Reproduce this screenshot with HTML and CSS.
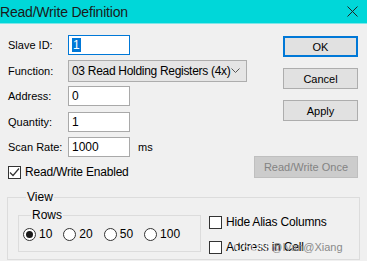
FILE: index.html
```html
<!DOCTYPE html>
<html>
<head>
<meta charset="utf-8">
<link rel="stylesheet" href="styles.css">
</head>
<body>
<div class="window">
  <div class="titlebar">
    <span class="title">Read/Write Definition</span>
    <svg class="close" width="11" height="11" viewBox="0 0 11 11"><path d="M0.5 0.5 L10.5 10.5 M10.5 0.5 L0.5 10.5" stroke="#222" stroke-width="1" fill="none"/></svg>
  </div>
  <div class="content">
    <div class="form">
      <div class="row r1"><span class="label">Slave ID:</span><span class="input focus"><span class="sel">1</span></span></div>
      <div class="row r2"><span class="label">Function:</span><span class="combo"><span>03 Read Holding Registers (4x)</span><svg width="9" height="6" viewBox="0 0 9 6"><path d="M0.5 0.5 L4.5 4.5 L8.5 0.5" stroke="#555" fill="none"/></svg></span></div>
      <div class="row r3"><span class="label">Address:</span><span class="input">0</span></div>
      <div class="row r4"><span class="label">Quantity:</span><span class="input">1</span></div>
      <div class="row r5"><span class="label">Scan Rate:</span><span class="input">1000</span><span class="unit">ms</span></div>
      <div class="row r6"><span class="check"><svg width="11" height="11" viewBox="0 0 11 11"><path d="M1 5.5 L4 8.5 L10 1.5" stroke="#333" stroke-width="1.2" fill="none"/></svg></span><span class="cklabel">Read/Write Enabled</span></div>
    </div>
    <div class="buttons">
      <span class="btn ok">OK</span>
      <span class="btn">Cancel</span>
      <span class="btn">Apply</span>
      <span class="btn wide disabled">Read/Write Once</span>
    </div>
  </div>
  <fieldset class="view">
    <legend>View</legend>
    <div class="viewgrid">
      <div class="leftcol">
        <fieldset class="rows">
          <legend>Rows</legend>
          <div class="radios">
            <span class="radio on"></span><span class="rlabel">10</span>
            <span class="radio"></span><span class="rlabel">20</span>
            <span class="radio"></span><span class="rlabel">50</span>
            <span class="radio"></span><span class="rlabel">100</span>
          </div>
        </fieldset>
        <div class="cutbtn"></div>
      </div>
      <div class="rightcol">
        <div class="ckrow"><span class="check"></span><span class="cklabel">Hide Alias Columns</span></div>
        <div class="ckrow"><span class="check"></span><span class="cklabel">Address in Cell</span></div>
      </div>
    </div>
  </fieldset>
  <span class="watermark">CSDN <span class="wm2">@Ivan@Xiang</span></span>
</div>
</body>
</html>
```
FILE: styles.css
```css
* { box-sizing: border-box; }
html, body { margin: 0; padding: 0; }
body {
  width: 367px; height: 261px; overflow: hidden;
  background: #f0f0f0;
  font-family: "Liberation Sans", Arial, sans-serif;
  font-size: 11px;
  color: #000;
}
.window { position: relative; width: 367px; height: 261px; overflow: hidden; }
.titlebar {
  height: 24px;
  background: #00d7d9;
  border-bottom: 1px solid #7fe6e8;
  display: flex; align-items: center; justify-content: space-between;
  padding: 0 9px 0 0;
}
.title { font-size: 14px; color: #1a1a1a; letter-spacing: -0.2px; }
.content {
  display: flex; justify-content: space-between;
  padding: 0 9px 0 8px;
}
.form { display: flex; flex-direction: column; padding-top: 11px; }
.row { display: flex; align-items: center; }
.label { width: 60px; }
.r2 { margin-top: 5px; }
.r3 { margin-top: 4px; }
.r4 { margin-top: 6px; }
.r5 { margin-top: 5px; }
.r6 { margin-top: 8px; }
.input {
  width: 62px; height: 20px;
  background: #fff; border: 1px solid #a9a9a9;
  padding: 0 3px; line-height: 18px;
  font-size: 12px;
}
.input.focus { border-color: #0078d7; }
.sel { background: #0078d7; color: #fff; padding: 0 1px; }
.combo {
  width: 179px; height: 22px;
  background: #e5e5e5; border: 1px solid #adadad;
  display: flex; align-items: center; justify-content: space-between;
  padding: 0 6px 0 3px; font-size: 12px; letter-spacing: -0.3px;
}
.unit { margin-left: 8px; }
.check {
  width: 13px; height: 13px; background: #fff; border: 1px solid #333;
  display: inline-flex; align-items: center; justify-content: center;
}
.cklabel { margin-left: 4px; font-size: 12px; letter-spacing: -0.2px; }
.buttons {
  display: flex; flex-direction: column; align-items: flex-end;
  padding-top: 12px;
}
.btn {
  width: 75px; height: 21px;
  background: #e1e1e1; border: 1px solid #adadad;
  display: flex; align-items: center; justify-content: center;
  font-size: 11px; margin-bottom: 11px;
}
.btn.ok { border: 2px solid #0078d7; }
.btn.wide { width: 104px; height: 22px; margin-top: 24px; margin-bottom: 0; }
.btn.disabled { background: #cccccc; border-color: #bfbfbf; color: #838383; }
.view {
  margin: 11px 7px 0 7px; padding: 4px 8px 0 10px;
  border: 1px solid #dcdcdc; height: 70px;
}
.view legend { padding: 0 1px; margin-left: 8px; font-size: 12px; }
.viewgrid { display: flex; }
.leftcol { width: 183px; }
.rows {
  margin: 0; padding: 5px 0 10px 4px; border: 1px solid #dcdcdc;
}
.rows legend { padding: 0 1px; margin-left: 8px; font-size: 12px; }
.radios { display: flex; align-items: center; }
.radio {
  width: 13px; height: 13px; border-radius: 50%; border: 1px solid #333; background: #fff;
  display: inline-flex; align-items: center; justify-content: center;
}
.radio.on::after { content: ""; width: 7px; height: 7px; border-radius: 50%; background: #1a1a1a; }
.rlabel { margin: 0 11px 0 3px; font-size: 12px; }
.cutbtn { margin: 9px 0 0 42px; width: 134px; height: 20px; border: 1px solid #adadad; background: #e1e1e1; }
.rightcol { padding: 7px 0 0 8px; }
.ckrow { display: flex; align-items: center; margin-bottom: 11px; }
.watermark {
  position: absolute; left: 234px; top: 240px;
  font-size: 12px; color: rgba(255,255,255,0.75);
}
.wm2 { font-size: 11px; color: #8a8a8a; }
```
